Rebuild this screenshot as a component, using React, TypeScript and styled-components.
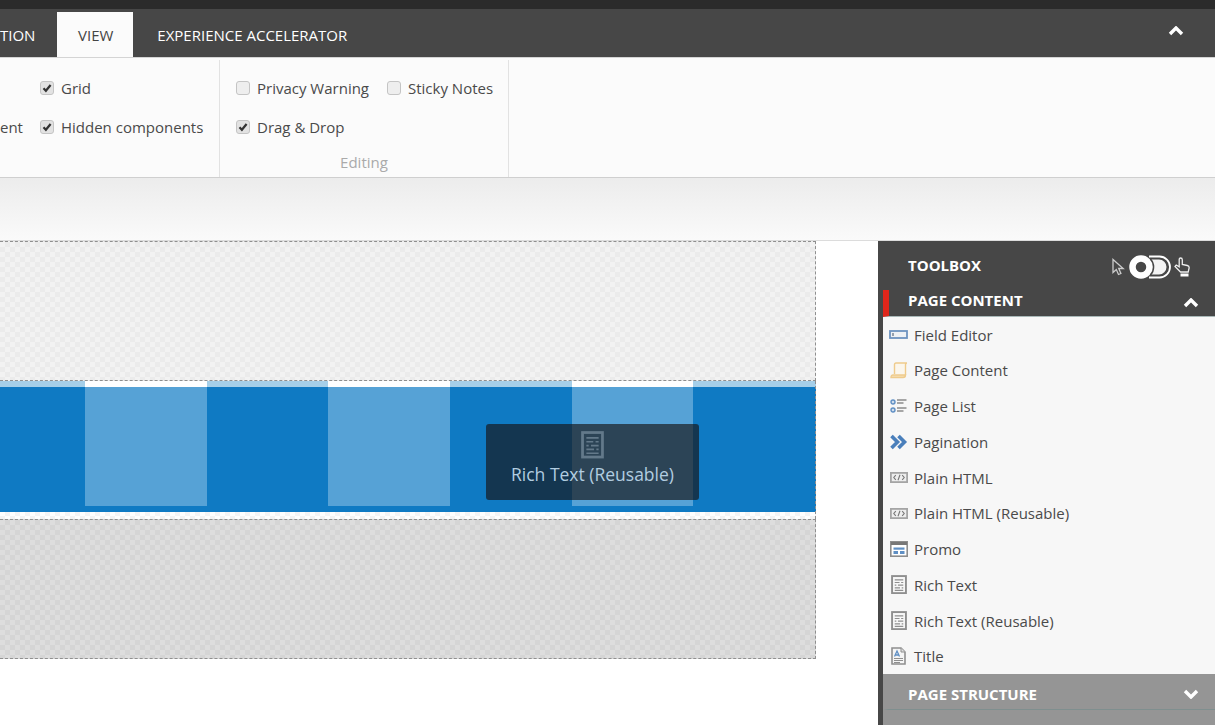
import React from 'react'
import styled, { createGlobalStyle } from 'styled-components'

const GlobalStyle = createGlobalStyle`
  html, body {
    margin: 0;
    padding: 0;
    background: #fff;
  }
  body {
    font-family: 'Open Sans', 'Liberation Sans', sans-serif;
    overflow: hidden;
  }
`

const SPage = styled.div`
  width: 1215px;
  height: 725px;
  overflow: hidden;
  display: flex;
  flex-direction: column;
`

const STopBar = styled.div`
  height: 9px;
  flex: none;
  background: #2b2b2b;
`

const STabBar = styled.div`
  height: 48px;
  flex: none;
  background: #474747;
  display: flex;
  align-items: flex-end;
  justify-content: space-between;
  overflow: hidden;
`

const STabs = styled.div`
  display: flex;
`

const STab = styled.div<{ $active?: boolean }>`
  height: 45px;
  box-sizing: border-box;
  padding: 13px ${(p) => (p.$active ? '20px' : '24px')} 0 ${(p) => (p.$active ? '21px' : '24px')};
  font-size: 15px;
  line-height: 20px;
  text-transform: uppercase;
  color: ${(p) => (p.$active ? '#444' : '#fff')};
  background: ${(p) => (p.$active ? '#fbfbfb' : 'transparent')};
  white-space: nowrap;
`

const SCutTab = styled(STab)`
  width: 57px;
  padding-left: 0;
  padding-right: 0;
`

const SCollapse = styled.div`
  align-self: flex-start;
  margin: 17px 31px 0 0;
  line-height: 0;
`

const SRibbon = styled.div`
  height: 121px;
  flex: none;
  box-sizing: border-box;
  background: #fbfbfb;
  border-top: 1px solid #d4d4d4;
  border-bottom: 1px solid #cfcfcf;
  display: flex;
  padding-top: 2px;
`

const SGroup = styled.div<{ $width: number }>`
  width: ${(p) => p.$width}px;
  box-sizing: border-box;
  flex: none;
  border-right: 1px solid #e2e2e2;
  display: flex;
  flex-direction: column;
`

const SOptionRows = styled.div<{ $flush?: boolean }>`
  flex: 1;
  display: flex;
  flex-direction: column;
  gap: 19px;
  padding: 18px 0 0 ${(p) => (p.$flush ? '0' : '16px')};
`

const SOptionRow = styled.div<{ $indent?: number }>`
  display: flex;
  gap: 18px;
  height: 20px;
  padding-left: ${(p) => p.$indent ?? 0}px;
  font-size: 15px;
  line-height: 20px;
  color: #4a4a4a;
`

const SCutLabel = styled.span`
  width: 22px;
  white-space: nowrap;
`

const SOption = styled.label`
  display: flex;
  align-items: center;
  gap: 7px;
  white-space: nowrap;
`

const SCheckbox = styled.span<{ $checked?: boolean }>`
  width: 14px;
  height: 14px;
  box-sizing: border-box;
  border: 1px solid #c4c4c4;
  border-radius: 3px;
  background: ${(p) => (p.$checked ? '#e2e2e2' : '#eeeeee')};
  display: flex;
  align-items: center;
  justify-content: center;
  flex: none;
`

const SGroupTitle = styled.div`
  height: 25px;
  font-size: 15px;
  line-height: 20px;
  color: #aaa;
  text-align: center;
`

const SStrip = styled.div`
  height: 62px;
  flex: none;
  background: linear-gradient(#ececec, #fafafa);
  border-bottom: 1px solid #dcdcdc;
`

const SMain = styled.div`
  flex: 1;
  display: flex;
  justify-content: space-between;
  min-height: 0;
`

const SCanvas = styled.div`
  width: 816px;
  flex: none;
`

const SPlaceholder = styled.div<{ $dark?: boolean }>`
  height: 140px;
  box-sizing: border-box;
  border: 1px dashed #8f8f8f;
  border-left: none;
  background-color: ${(p) => (p.$dark ? '#dddddd' : '#f2f2f2')};
  background-image: conic-gradient(
    ${(p) => (p.$dark ? '#d5d5d5' : '#ebebeb')} 25%,
    transparent 0 50%,
    ${(p) => (p.$dark ? '#d5d5d5' : '#ebebeb')} 0 75%,
    transparent 0
  );
  background-size: 10px 10px;
`

const SBand = styled.div`
  position: relative;
  height: 138px;
  box-sizing: border-box;
  width: 816px;
  border-right: 1px dashed #8f8f8f;
  padding-left: 85px;
  display: flex;
  gap: 121.65px;
  background:
    linear-gradient(#a5cfe9 6px, #0f7ac3 6px, #0f7ac3 131px, transparent 131px),
    conic-gradient(#f4f4f4 25%, #fff 0 50%, #f4f4f4 0 75%, #fff 0) 0 0 / 10px 10px;
`

const SBandColumn = styled.div`
  width: 121.65px;
  height: 125px;
  box-sizing: border-box;
  border-top: 6px solid #fff;
  background: #56a2d6;
`

const SDragTip = styled.div`
  position: absolute;
  left: 486px;
  top: 43px;
  width: 213px;
  height: 76px;
  border-radius: 3px;
  background: rgba(23, 19, 20, 0.66);
  color: #b2cde0;
  display: flex;
  flex-direction: column;
  align-items: center;
  padding-top: 7px;
  box-sizing: border-box;
  font-size: 17.5px;
  line-height: 24px;
  gap: 3px;
`

const SToolbox = styled.aside`
  width: 337px;
  flex: none;
  box-sizing: border-box;
  border-left: 5px solid #474747;
  background: #959595;
  display: flex;
  flex-direction: column;
`

const SToolboxHead = styled.div`
  height: 49px;
  flex: none;
  box-sizing: border-box;
  background: #474747;
  display: flex;
  align-items: center;
  justify-content: space-between;
  padding: 0 24px 2px 25px;
  font-size: 15px;
  font-weight: 700;
  color: #fff;
  text-transform: uppercase;
`

const SModes = styled.div`
  display: flex;
  align-items: center;
  gap: 3px;
  margin-top: 4px;
`

const SSection = styled.div<{ $active?: boolean }>`
  height: ${(p) => (p.$active ? '26.75px' : '36px')};
  flex: none;
  box-sizing: border-box;
  background: ${(p) => (p.$active ? '#474747' : '#959595')};
  border-left: 6px solid ${(p) => (p.$active ? '#e0261b' : 'transparent')};
  border-bottom: 1px solid ${(p) => (p.$active ? '#a9b8b8' : '#7f8f8f')};
  display: flex;
  align-items: ${(p) => (p.$active ? 'flex-start' : 'center')};
  justify-content: space-between;
  padding: ${(p) => (p.$active ? '0' : '4px')} 16px 0 19px;
  font-size: 15px;
  font-weight: 700;
  line-height: 20px;
  margin-top: ${(p) => (p.$active ? '0' : '0')};
  color: #fff;
  text-transform: uppercase;
`

const SChevronBox = styled.span`
  line-height: 0;
  align-self: center;
`

const SList = styled.div`
  flex: none;
  background: #f7f7f7;
`

const SItem = styled.div`
  height: 35.75px;
  display: flex;
  align-items: center;
  gap: 6px;
  padding-left: 6px;
  font-size: 15px;
  color: #4a4a4a;
  white-space: nowrap;
`

const SIconSlot = styled.span`
  width: 19px;
  height: 19px;
  flex: none;
  display: flex;
  align-items: center;
  justify-content: center;
`

function Check() {
  return (
    <svg width="10" height="10" viewBox="0 0 10 10">
      <path d="M1.5 5.2 3.9 7.8 8.6 2" fill="none" stroke="#333" strokeWidth="2.2" />
    </svg>
  )
}

function Option({ label, checked }: { label: string; checked?: boolean }) {
  return (
    <SOption>
      <SCheckbox $checked={checked}>{checked && <Check />}</SCheckbox>
      {label}
    </SOption>
  )
}

function Chevron({ down }: { down?: boolean }) {
  return (
    <svg width="16" height="10" viewBox="0 0 16 10">
      <path
        d={down ? 'M2 2 8 8 14 2' : 'M2 8 8 2 14 8'}
        fill="none"
        stroke="#fff"
        strokeWidth="3.4"
      />
    </svg>
  )
}

function RichTextIcon({ size = 16, color = '#8f8f8f' }: { size?: number; color?: string }) {
  return (
    <svg width={size} height={size * 1.2} viewBox="0 0 15 18">
      <rect x="1" y="1" width="13" height="16" fill="none" stroke={color} strokeWidth="1.8" />
      <path
        d="M3.5 4.5h8M3.5 7h4.500M9.500 7h2M3.500 9.500h1.500M6.500 9.500h5M3.500 12h5M10 12h1.500M3.500 14.500h8"
        fill="none"
        stroke={color}
        strokeWidth="1.1"
      />
    </svg>
  )
}

function FieldIcon() {
  return (
    <svg width="19" height="10" viewBox="0 0 19 10">
      <rect x="1" y="1" width="17" height="7" fill="#eef1f5" stroke="#6d93c0" strokeWidth="1.8" />
      <path d="M4 3v3" stroke="#5a6a7c" strokeWidth="1.2" />
    </svg>
  )
}

function ScrollIcon() {
  return (
    <svg width="18" height="17" viewBox="0 0 18 17">
      <path d="M4.500 12V2.500Q4.500 1 6 1H17Q15.500 1 15.500 3V13" fill="#fbf6ec" stroke="#efcb8c" strokeWidth="1.4" />
      <path d="M1 15.500H13Q15.500 15.500 15.500 13H3Q1 13 1 15.500Z" fill="#f6dfb4" stroke="#efcb8c" strokeWidth="1.4" />
    </svg>
  )
}

function ListIcon() {
  return (
    <svg width="17" height="17" viewBox="0 0 17 17">
      <circle cx="3" cy="4" r="2" fill="#cfdceb" stroke="#5f8fc4" strokeWidth="1.4" />
      <circle cx="3" cy="12" r="2" fill="#cfdceb" stroke="#5f8fc4" strokeWidth="1.4" />
      <path d="M7 2h9.500M7 5h6.500M7 10h9.500M7 13h6.500" stroke="#8c8c8c" strokeWidth="1.5" />
    </svg>
  )
}

function DoubleChevronIcon() {
  return (
    <svg width="18" height="16" viewBox="0 0 18 16">
      <path d="M1.500 2 7.500 8 1.500 14M8.500 2 14.500 8 8.500 14" fill="none" stroke="#4a7fbb" strokeWidth="3.6" />
    </svg>
  )
}

function HtmlIcon() {
  return (
    <svg width="18" height="11" viewBox="0 0 18 11">
      <rect x="0.9" y="0.9" width="16.2" height="9.2" fill="#eeeeee" stroke="#a5a5a5" strokeWidth="1.8" />
      <path d="M5.800 3.200 3.800 5.500 5.800 7.800M12.200 3.200 14.200 5.500 12.200 7.800M10 2.800 8 8.200" fill="none" stroke="#777" strokeWidth="1.1" />
    </svg>
  )
}

function PromoIcon() {
  return (
    <svg width="18" height="16" viewBox="0 0 18 16">
      <rect x="0.8" y="0.8" width="16.4" height="14.4" fill="#fff" stroke="#8d8d8d" strokeWidth="1.6" />
      <rect x="1" y="1" width="16" height="3" fill="#777" />
      <rect x="3.5" y="6.5" width="11" height="2.2" fill="#5f8fc4" />
      <rect x="3.5" y="10" width="4.5" height="3" fill="#5f8fc4" />
      <rect x="10" y="10" width="4.5" height="3" fill="#5f8fc4" />
    </svg>
  )
}

function TitleIcon() {
  return (
    <svg width="15" height="18" viewBox="0 0 15 18">
      <path d="M1 1h9l4 4v12H1z" fill="#f5f5f5" stroke="#8f8f8f" strokeWidth="1.6" />
      <path d="M10 1v4h4" fill="#ddd" stroke="#8f8f8f" strokeWidth="1" />
      <path d="M3.500 9.500 6 4 8.500 9.500M4.500 8h3" fill="none" stroke="#5f8fc4" strokeWidth="1.3" />
      <path d="M3 11.500h9M3 13.500h9M3 15.500h6" stroke="#8f8f8f" strokeWidth="1" />
    </svg>
  )
}

function ArrowCursor() {
  return (
    <svg width="15" height="18" viewBox="0 0 15 18">
      <path d="M2 1.500v13l3.300-3 2.200 5 2.400-1-2.200-5h4.500z" fill="#474747" stroke="#ccc" strokeWidth="1.3" />
    </svg>
  )
}

function HandCursor() {
  return (
    <svg width="17" height="20" viewBox="0 0 17 20">
      <path
        d="M6.500 1c1.200 0 1.800.7 1.800 1.800v4.700l5 1c1.200.3 1.900 1 1.900 2.200l-1 4.300H6.500L1 9.500l1.200-1.500 3 1.800V2.800C5.200 1.700 5.700 1 6.500 1z"
        fill="#474747"
        stroke="#eee"
        strokeWidth="1.3"
      />
      <rect x="6.5" y="16.500" width="8" height="3" fill="#fff" />
    </svg>
  )
}

function ModeToggle() {
  return (
    <svg width="42" height="24" viewBox="0 0 42 24">
      <path d="M20 1.500h10.500a10.500 10.500 0 0 1 0 21H20" fill="none" stroke="#fff" strokeWidth="1.8" />
      <path d="M22 4.500h8a7.500 7.500 0 0 1 0 15h-8z" fill="#f4f4f4" />
      <circle cx="12" cy="12" r="8.5" fill="#474747" stroke="#fff" strokeWidth="6.5" />
      <path d="M21.500 4a12 12 0 0 1 0 16" fill="none" stroke="#474747" strokeWidth="1.5" />
    </svg>
  )
}

const TOOLS: { label: string; icon: React.ReactElement }[] = [
  { label: 'Field Editor', icon: <FieldIcon /> },
  { label: 'Page Content', icon: <ScrollIcon /> },
  { label: 'Page List', icon: <ListIcon /> },
  { label: 'Pagination', icon: <DoubleChevronIcon /> },
  { label: 'Plain HTML', icon: <HtmlIcon /> },
  { label: 'Plain HTML (Reusable)', icon: <HtmlIcon /> },
  { label: 'Promo', icon: <PromoIcon /> },
  { label: 'Rich Text', icon: <RichTextIcon /> },
  { label: 'Rich Text (Reusable)', icon: <RichTextIcon /> },
  { label: 'Title', icon: <TitleIcon /> },
]

export default function App(): React.ReactElement {
  return (
    <SPage>
      <GlobalStyle />
      <STopBar />
      <STabBar>
        <STabs>
          <SCutTab>tion</SCutTab>
          <STab $active>View</STab>
          <STab>Experience Accelerator</STab>
        </STabs>
        <SCollapse>
          <Chevron />
        </SCollapse>
      </STabBar>
      <SRibbon>
        <SGroup $width={220}>
          <SOptionRows $flush>
            <SOptionRow $indent={40}>
              <Option label="Grid" checked />
            </SOptionRow>
            <SOptionRow>
              <SCutLabel>ent</SCutLabel>
              <Option label="Hidden components" checked />
            </SOptionRow>
          </SOptionRows>
        </SGroup>
        <SGroup $width={289}>
          <SOptionRows>
            <SOptionRow>
              <Option label="Privacy Warning" />
              <Option label="Sticky Notes" />
            </SOptionRow>
            <SOptionRow>
              <Option label="Drag & Drop" checked />
            </SOptionRow>
          </SOptionRows>
          <SGroupTitle>Editing</SGroupTitle>
        </SGroup>
      </SRibbon>
      <SStrip />
      <SMain>
        <SCanvas>
          <SPlaceholder />
          <SBand>
            <SBandColumn />
            <SBandColumn />
            <SBandColumn />
            <SDragTip>
              <RichTextIcon size={23} color="#63798a" />
              Rich Text (Reusable)
            </SDragTip>
          </SBand>
          <SPlaceholder $dark />
        </SCanvas>
        <SToolbox>
          <SToolboxHead>
            Toolbox
            <SModes>
              <ArrowCursor />
              <ModeToggle />
              <HandCursor />
            </SModes>
          </SToolboxHead>
          <SSection $active>
            Page Content
            <SChevronBox>
              <Chevron />
            </SChevronBox>
          </SSection>
          <SList>
            {TOOLS.map((tool) => (
              <SItem key={tool.label}>
                <SIconSlot>{tool.icon}</SIconSlot>
                {tool.label}
              </SItem>
            ))}
          </SList>
          <SSection>
            Page Structure
            <SChevronBox>
              <Chevron down />
            </SChevronBox>
          </SSection>
        </SToolbox>
      </SMain>
    </SPage>
  )
}
